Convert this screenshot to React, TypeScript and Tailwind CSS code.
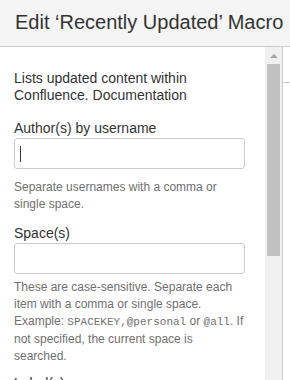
import React from "react";

const help = "text-[12px] leading-[17px] text-[#707070]";
const label = "text-[14px] leading-[20px] text-[#333]";
const input = "h-[31px] w-[231px] rounded-[3px] border border-[#ccc] bg-white";
const mono = "font-['Liberation_Mono',monospace] text-[11px]";

const App = () => {
  return (
    <div className="flex h-[380px] w-[290px] flex-col overflow-hidden bg-white font-['Liberation_Sans',Arial,sans-serif]">
      <div className="flex h-[47px] shrink-0 items-center border-b border-[#ccc] bg-[#f5f5f5] pb-[2px] pl-[15px] whitespace-nowrap">
        <h1 className="text-[20px] leading-[28px] text-[#333]">Edit ‘Recently Updated’ Macro</h1>
      </div>

      <div className="flex min-h-0 flex-1">
        <div className="w-[265px] shrink-0 pl-[14px] pt-[23px]">
          <div className="w-[231px]">
            <p className="text-[14px] leading-[17px] text-[#333]">
              Lists updated content within Confluence. Documentation
            </p>

            <div className="mt-[14px]">
              <div className={label}>Author(s) by username</div>
              <div className={`${input} flex items-center pl-[5px]`}>
                <div className="h-[16px] w-px bg-[#333]" />
              </div>
              <p className={`${help} mt-[10px]`}>
                Separate usernames with a comma or single space.
              </p>
            </div>

            <div className="mt-[10px]">
              <div className={label}>Space(s)</div>
              <div className={input} />
              <p className={`${help} mt-[5px]`}>
                These are case-sensitive. Separate each item with a comma or
                single space. Example: <code className={mono}>SPACEKEY,@personal</code>{" "}
                or <code className={mono}>@all</code>. If not specified, the
                current space is searched.
              </p>
            </div>

            <div className="mt-[8px]">
              <div className={label}>Label(s)</div>
            </div>
          </div>
        </div>

        {/* scrollbar */}
        <div className="flex w-[17px] shrink-0 flex-col items-center bg-[#f0f0f0]">
          <div className="mt-[7px] h-0 w-0 border-x-[4px] border-b-[4px] border-x-transparent border-b-[#a3a3a3]" />
          <div className="mt-[6px] h-[192px] w-[13px] bg-[#c1c1c1]" />
        </div>
        <div className="w-px shrink-0 bg-[#ccc]" />
        <div className="flex-1">
          <div className="h-[36px] border-b border-[#ccc]" />
        </div>
      </div>
    </div>
  );
};

export default App;
